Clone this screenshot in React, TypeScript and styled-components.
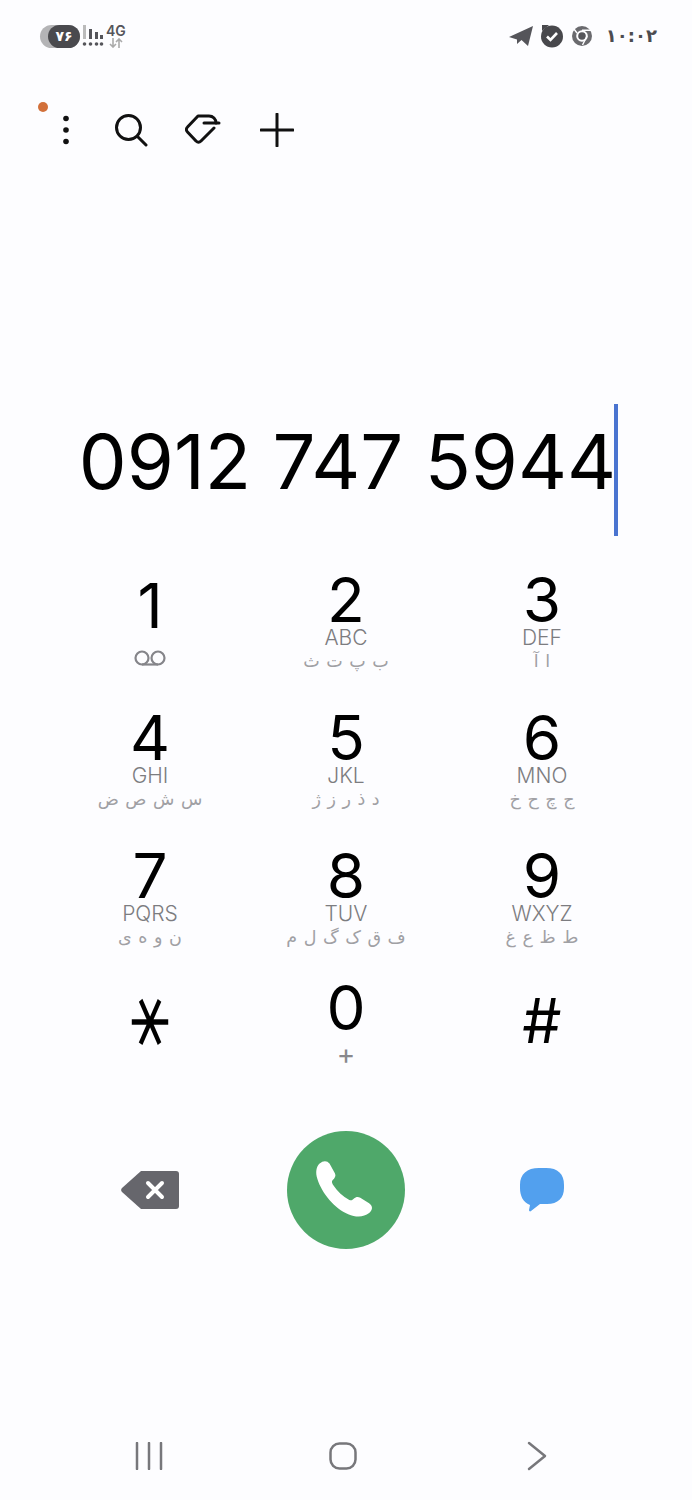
import React from "react";
import styled, { createGlobalStyle } from "styled-components";

const Global = createGlobalStyle`
  html, body { margin: 0; padding: 0; background: #fdfdff; }
  body { font-family: Inter, "Noto Sans", "DejaVu Sans", sans-serif; }
`;

const Page = styled.div`
  width: 692px;
  height: 1500px;
  display: flex;
  flex-direction: column;
  background: #fdfdff;
  overflow: hidden;
`;

const StatusBar = styled.div`
  height: 100px;
  box-sizing: border-box;
  padding: 24px 35px 0 40px;
  display: flex;
  justify-content: space-between;
  align-items: flex-start;
`;
const StatusGroup = styled.div<{ $gap?: number }>`
  display: flex;
  align-items: center;
  gap: ${(p) => p.$gap ?? 4}px;
`;
const Battery = styled.div`
  width: 40px;
  height: 23px;
  border-radius: 12px;
  background: #b4b4b6;
  display: flex;
  justify-content: flex-end;
`;
const BatteryFill = styled.div`
  width: 32px;
  height: 23px;
  border-radius: 12px;
  background: #4a4a4e;
  color: #fff;
  font: 700 14px "DejaVu Sans", sans-serif;
  display: flex;
  align-items: center;
  justify-content: center;
`;
const NetLabel = styled.div`
  display: flex;
  flex-direction: column;
  align-items: center;
  font: 600 14px/14px Inter, sans-serif;
  color: #55555a;
`;
const Clock = styled.div`
  font: 700 18px/24px "DejaVu Sans", sans-serif;
  color: #4c4c50;
  margin-left: 6px;
  letter-spacing: -3.500px;
`;

const Toolbar = styled.div`
  height: 60px;
  box-sizing: border-box;
  padding-left: 36px;
  display: flex;
  align-items: center;
  position: relative;
`;
const NotifyDot = styled.span`
  position: absolute;
  left: 38px;
  top: 2px;
  width: 10px;
  height: 10px;
  border-radius: 50%;
  background: #d2703a;
`;
const ToolIcon = styled.div<{ $w: number }>`
  width: ${(p) => p.$w}px;
  height: 60px;
  display: flex;
  align-items: center;
  justify-content: center;
`;

const NumberArea = styled.div`
  height: 394px;
  box-sizing: border-box;
  padding-top: 244px;
  display: flex;
  justify-content: center;
`;
const NumberText = styled.div`
  display: flex;
  height: 132px;
  align-items: center;
  margin-left: 5px;
`;
const NumberValue = styled.span`
  font: 400 76px/1 Inter, sans-serif;
  color: #000;
  white-space: nowrap;
  margin-bottom: 18px;
`;
const Caret = styled.span`
  width: 4px;
  height: 132px;
  background: #4a74d0;
  margin-left: -2px;
`;

const Keypad = styled.div`
  padding: 0 52px;
  display: grid;
  grid-template-columns: repeat(3, 196px);
  grid-template-rows: repeat(3, 138px) 105px;
`;
const Key = styled.div`
  display: flex;
  flex-direction: column;
  align-items: center;
  justify-content: center;
`;
const ZeroKey = styled(Key)`
  padding-top: 6px;
`;
const Digit = styled.div`
  font: 400 62px/52px Inter, sans-serif;
  color: #000;
`;
const Star = styled.div`
  font: 200 92px/52px "DejaVu Sans", sans-serif;
  color: #000;
  -webkit-text-stroke: 3px #000;
  transform: translate(-13px, 1px) rotate(90deg) scale(1.07, 0.82);
  height: 52px;
`;
const Letters = styled.div`
  font: 300 21px/22px Inter, sans-serif;
  color: #7c7c80;
  margin-top: 1px;
`;
const Farsi = styled.div`
  font: 400 17.500px/24px "DejaVu Sans", sans-serif;
  color: #a0a0a4;
  direction: rtl;
  white-space: nowrap;
  word-spacing: 1px;
`;
const Plus = styled.div`
  font: 400 28px/24px Inter, sans-serif;
  color: #88888c;
  margin-top: 8px;
`;
const VoicemailIcon = styled.svg`
  margin-top: 18px;
`;

const Actions = styled.div`
  padding: 58px 52px 0;
  display: grid;
  grid-template-columns: repeat(3, 196px);
  justify-items: center;
  align-items: center;
  height: 118px;
`;
const CallButton = styled.div`
  width: 118px;
  height: 118px;
  border-radius: 50%;
  background: #4fa86a;
  display: flex;
  align-items: center;
  justify-content: center;
`;

const NavBar = styled.div`
  margin-top: 187px;
  padding: 0 52px;
  display: grid;
  grid-template-columns: repeat(3, 194px);
  justify-items: center;
  align-items: center;
  height: 40px;
`;

const keys = [
  { d: "1", v: true },
  { d: "2", l: "ABC", f: "ب پ ت ث" },
  { d: "3", l: "DEF", f: "ا آ" },
  { d: "4", l: "GHI", f: "س ش ص ض" },
  { d: "5", l: "JKL", f: "د ذ ر ز ژ" },
  { d: "6", l: "MNO", f: "ج چ ح خ" },
  { d: "7", l: "PQRS", f: "ن و ه ی" },
  { d: "8", l: "TUV", f: "ف ق ک گ ل م" },
  { d: "9", l: "WXYZ", f: "ط ظ ع غ" },
];

export default function App() {
  return (
    <Page>
      <Global />
      <StatusBar>
        <StatusGroup $gap={2}>
          <Battery><BatteryFill>۷۶</BatteryFill></Battery>
          <svg width="22" height="24" viewBox="0 0 22 24" fill="#55555a">
            <rect x="1" y="1" width="3" height="14" fill="#bbb" />
            <rect x="7" y="5" width="3" height="10" />
            <rect x="13" y="8" width="3" height="7" />
            <rect x="18" y="11" width="3" height="4" />
            <circle cx="2.500" cy="20" r="1.800" /><circle cx="8.500" cy="20" r="1.800" />
            <circle cx="14.500" cy="20" r="1.800" /><circle cx="19.500" cy="20" r="1.800" />
          </svg>
          <NetLabel>
            4G
            <svg width="16" height="10" viewBox="0 0 16 10" fill="none" stroke="#aaa" strokeWidth="1.600">
              <path d="M5 0v9M2 6l3 3 3-3M11 10V1M8 4l3-3 3 3" />
            </svg>
          </NetLabel>
        </StatusGroup>
        <StatusGroup $gap={7}>
          <svg width="24" height="24" viewBox="0 0 24 24" fill="#55555a">
            <path d="M0 13 24 2 19 22 12.500 16 8 20 8 15.500Z" />
          </svg>
          <svg width="24" height="24" viewBox="0 0 24 24">
            <circle cx="12" cy="12.500" r="11" fill="#48484c" />
            <path d="M2 1h7L2 7Z" fill="#48484c" />
            <path d="M7 12.500l3.500 3.500L17 9" fill="none" stroke="#fff" strokeWidth="2.600" />
          </svg>
          <svg width="22" height="22" viewBox="0 0 22 22">
            <circle cx="11" cy="11" r="10" fill="#6a6a6e" />
            <circle cx="11" cy="11" r="5.800" fill="#fdfdff" />
            <circle cx="11" cy="11" r="3.800" fill="#55555a" />
            <path d="M11 5.200h9M16 11l-4.500 9M6 8 1.500 2" stroke="#fdfdff" strokeWidth="1.400" />
          </svg>
          <Clock>۱۰:۰۲</Clock>
        </StatusGroup>
      </StatusBar>

      <Toolbar>
        <NotifyDot />
        <ToolIcon $w={60}>
          <svg width="8" height="30" viewBox="0 0 8 30" fill="#111">
            <circle cx="4" cy="3.500" r="2.800" /><circle cx="4" cy="15" r="2.800" /><circle cx="4" cy="26.500" r="2.800" />
          </svg>
        </ToolIcon>
        <ToolIcon $w={70}>
          <svg width="34" height="34" viewBox="0 0 34 34" fill="none" stroke="#111" strokeWidth="3" strokeLinecap="round">
            <circle cx="14.500" cy="14.500" r="12" /><path d="M23.500 23.500 32 32" />
          </svg>
        </ToolIcon>
        <ToolIcon $w={74}>
          <svg width="36" height="32" viewBox="0 0 36 32" fill="none" stroke="#111" strokeWidth="3" strokeLinecap="round" strokeLinejoin="round">
            <path d="M31 9c0-4-3-7-7-7H13L2.500 13c-1.500 1.500-1.500 3.500 0 5L11 27c1.500 1.500 3.500 1.500 5 0L29 14" />
            <path d="M19 9h15" />
          </svg>
        </ToolIcon>
        <ToolIcon $w={74}>
          <svg width="34" height="34" viewBox="0 0 34 34" fill="none" stroke="#111" strokeWidth="3" strokeLinecap="round">
            <path d="M17 1v32M1 17h32" />
          </svg>
        </ToolIcon>
      </Toolbar>

      <NumberArea>
        <NumberText>
          <NumberValue>0912 747 5944</NumberValue>
          <Caret />
        </NumberText>
      </NumberArea>

      <Keypad>
        {keys.map((k) => (
          <Key key={k.d}>
            <Digit>{k.d}</Digit>
            {k.l && <Letters>{k.l}</Letters>}
            {k.f && <Farsi>{k.f}</Farsi>}
            {k.v && (
              <VoicemailIcon width="32" height="16" viewBox="0 0 32 16" fill="none" stroke="#85858a" strokeWidth="2.200">
                <circle cx="8" cy="8" r="6.500" /><circle cx="24" cy="8" r="6.500" /><path d="M8 14.500h16" />
              </VoicemailIcon>
            )}
          </Key>
        ))}
        <Key>
          <Star>*</Star>
        </Key>
        <ZeroKey>
          <Digit>0</Digit>
          <Plus>+</Plus>
        </ZeroKey>
        <Key>
          <Digit>#</Digit>
        </Key>
      </Keypad>

      <Actions>
        <svg width="58" height="38" viewBox="0 0 58 38">
          <path d="M20 0h35a3 3 0 0 1 3 3v32a3 3 0 0 1-3 3H20L1 21a3 3 0 0 1 0-4Z" fill="#66666c" />
          <path d="M27 12l14 14M41 12 27 26" stroke="#fff" strokeWidth="4" strokeLinecap="round" />
        </svg>
        <CallButton>
          <svg width="66" height="66" viewBox="0 0 60 60">
            <path d="M6 6c3-3 7-3 9 0l5 9c1 2 0 4-2 6-1 1-1 2 0 4 4 6 9 11 15 14 2 1 3 0 4-1 2-2 4-2 6-1l8 5c4 3 3 6 0 9-5 4-12 4-19 1C20 47 8 33 4 20 2 14 3 9 6 6Z" fill="#fff" />
          </svg>
        </CallButton>
        <svg width="46" height="46" viewBox="0 0 46 46">
          <path d="M20 1h7c12 0 18 6 18 17v3c0 10-6 16-17 16h-7l-9 7c-1 1-2 0-2-1l1-5C4 35 1 29 1 21v-3C1 7 8 1 20 1Z" fill="#52a0ee" />
        </svg>
      </Actions>

      <NavBar>
        <svg width="28" height="28" viewBox="0 0 28 28" stroke="#77777b" strokeWidth="2.500" strokeLinecap="round">
          <path d="M2 1v26M14 1v26M26 1v26" />
        </svg>
        <svg width="28" height="28" viewBox="0 0 28 28" fill="none" stroke="#77777b" strokeWidth="2.500">
          <rect x="1.500" y="1.500" width="25" height="25" rx="9" />
        </svg>
        <svg width="20" height="30" viewBox="0 0 20 30" fill="none" stroke="#77777b" strokeWidth="2.500" strokeLinecap="round" strokeLinejoin="round">
          <path d="M2 2l16 13L2 28" />
        </svg>
      </NavBar>
    </Page>
  );
}
